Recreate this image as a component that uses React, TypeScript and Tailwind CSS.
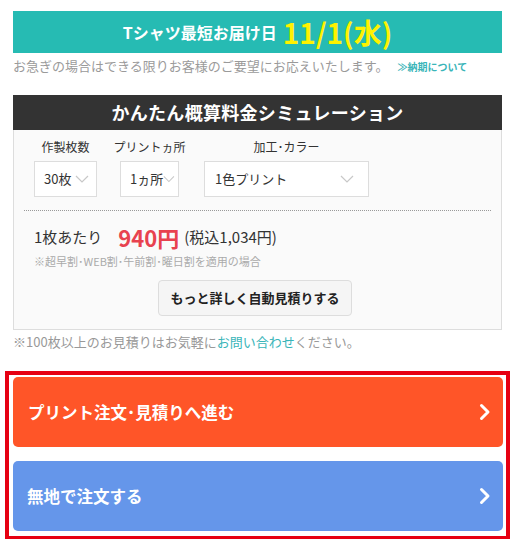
import React from "react";

const Chevron = ({ className = "" }: { className?: string }) => (
  <svg width="14" height="8" viewBox="0 0 14 8" className={className}>
    <path d="M1 1 L7 7 L13 1" fill="none" stroke="#c8c8c8" strokeWidth="1.2" />
  </svg>
);

const Arrow = () => (
  <svg width="12" height="18" viewBox="0 0 12 18">
    <path d="M2.5 2.5 L9 9 L2.5 15.5" fill="none" stroke="#fff" strokeWidth="3" strokeLinecap="round" strokeLinejoin="round" />
  </svg>
);

export default function App() {
  return (
    <div
      className="w-[511px] h-[540px] bg-white overflow-hidden"
      style={{ fontFamily: '"Noto Sans CJK JP", "Noto Sans", sans-serif' }}
    >
      <div className="ml-[13px] w-[489px]">
        <div className="mt-[11px] h-[42px] bg-[#26bbb3] flex items-center justify-center text-white font-bold">
          <span className="text-[16px] leading-none">Tシャツ最短お届け日</span>
          <span className="ml-[6px] text-[28px] leading-none text-[#fff200]">11/1(水)</span>
        </div>
        <div className="h-[26px] flex items-center text-[13px] text-[#9a9a9a] whitespace-nowrap">
          <span>お急ぎの場合はできる限りお客様のご要望にお応えいたします。</span>
          <span className="ml-[9px] text-[10px] font-bold text-[#3ab5b9]">≫納期について</span>
        </div>
        <div className="mt-[16px] h-[35px] bg-[#333333] flex items-center justify-center text-white font-bold text-[18px] tracking-[0.3px]">
          かんたん概算料金シミュレーション
        </div>
        <div className="h-[200px] bg-[#fafafa] border border-t-0 border-[#dddddd] px-[10px]">
          <div className="flex pl-[10px] pt-[6px]">
            <div className="flex flex-col items-center w-[63px]">
              <span className="text-[12px] text-[#333] h-[21px] leading-[21px] whitespace-nowrap">作製枚数</span>
              <div className="mt-[4px] w-[63px] h-[36px] border border-[#dddddd] bg-white flex items-center justify-between pl-[9px] pr-[7px] text-[13px] text-[#333] whitespace-nowrap">
                <span>30枚</span>
                <Chevron />
              </div>
            </div>
            <div className="ml-[23px] flex flex-col items-center w-[59px]">
              <span className="text-[12px] text-[#333] h-[21px] leading-[21px] whitespace-nowrap">プリントヵ所</span>
              <div className="mt-[4px] w-[59px] h-[36px] border border-[#dddddd] bg-white flex items-center justify-between pl-[9px] pr-[3px] text-[13px] text-[#333] whitespace-nowrap">
                <span>1ヵ所</span>
                <Chevron />
              </div>
            </div>
            <div className="ml-[25px] flex flex-col items-center w-[165px]">
              <span className="text-[12px] text-[#333] h-[21px] leading-[21px] whitespace-nowrap">加工･カラー</span>
              <div className="mt-[4px] w-[165px] h-[36px] border border-[#dddddd] bg-white flex items-center justify-between pl-[10px] pr-[14px] text-[13px] text-[#333] whitespace-nowrap">
                <span>1色プリント</span>
                <Chevron />
              </div>
            </div>
          </div>
          <div className="mt-[13px] border-t border-dotted border-[#999]" />
          <div className="pl-[10px] mt-[13px] flex items-center h-[26px] text-[#333]">
            <span className="text-[15px]">1枚あたり</span>
            <span className="ml-[16px] text-[22px] font-bold text-[#e8424f] leading-none">940円</span>
            <span className="ml-[5px] text-[15px]">(税込1,034円)</span>
          </div>
          <div className="pl-[10px] mt-[2px] h-[18px] flex items-center text-[11px] text-[#aaaaaa]">
            ※超早割･WEB割･午前割･曜日割を適用の場合
          </div>
          <div className="flex justify-center mt-[10px] pr-[5px]">
            <div className="w-[194px] h-[36px] rounded-[4px] border border-[#dddddd] bg-[#f5f5f5] flex items-center justify-center text-[13px] font-bold text-[#222]">
              もっと詳しく自動見積りする
            </div>
          </div>
        </div>
        <div className="h-[24px] flex items-center text-[13px] text-[#999]">
          <span>※100枚以上のお見積りはお気軽に</span>
          <span className="text-[#3ab5b9]">お問い合わせ</span>
          <span>ください。</span>
        </div>
      </div>
      <div className="mt-[17px] ml-[5px] w-[505px] h-[168px] border-4 border-b-[3px] border-[#e60012] pl-[4px] pr-[3px] pt-[2px] flex flex-col gap-[14px]">
        <div className="h-[70px] rounded-[5px] bg-[#ff5528] flex items-center justify-between pl-[15px] pr-[12px] text-white font-bold text-[16.5px]">
          <span>プリント注文･見積りへ進む</span>
          <Arrow />
        </div>
        <div className="h-[70px] rounded-[5px] bg-[#6596ea] flex items-center justify-between pl-[14px] pr-[12px] text-white font-bold text-[16.5px]">
          <span>無地で注文する</span>
          <Arrow />
        </div>
      </div>
    </div>
  );
}
